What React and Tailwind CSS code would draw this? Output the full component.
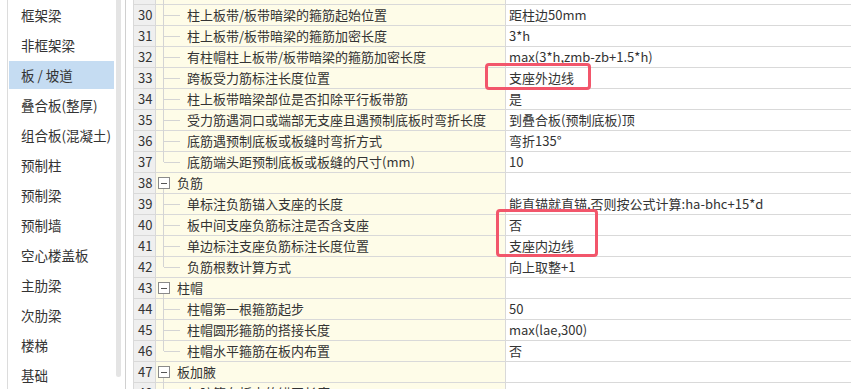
import React from 'react'

const menu = [
  '框架梁',
  '非框架梁',
  '板 / 坡道',
  '叠合板(整厚)',
  '组合板(混凝土)',
  '预制柱',
  '预制梁',
  '预制墙',
  '空心楼盖板',
  '主肋梁',
  '次肋梁',
  '楼梯',
  '基础',
]

// kind: child | last | group
const rows = [
  { n: '', name: '', value: '', kind: 'child' },
  { n: 30, name: '柱上板带/板带暗梁的箍筋起始位置', value: '距柱边50mm', kind: 'child' },
  { n: 31, name: '柱上板带/板带暗梁的箍筋加密长度', value: '3*h', kind: 'child' },
  { n: 32, name: '有柱帽柱上板带/板带暗梁的箍筋加密长度', value: 'max(3*h,zmb-zb+1.5*h)', kind: 'child' },
  { n: 33, name: '跨板受力筋标注长度位置', value: '支座外边线', kind: 'child' },
  { n: 34, name: '柱上板带暗梁部位是否扣除平行板带筋', value: '是', kind: 'child' },
  { n: 35, name: '受力筋遇洞口或端部无支座且遇预制底板时弯折长度', value: '到叠合板(预制底板)顶', kind: 'child' },
  { n: 36, name: '底筋遇预制底板或板缝时弯折方式', value: '弯折135°', kind: 'child' },
  { n: 37, name: '底筋端头距预制底板或板缝的尺寸(mm)', value: '10', kind: 'last' },
  { n: 38, name: '负筋', value: '', kind: 'group' },
  { n: 39, name: '单标注负筋锚入支座的长度', value: '能直锚就直锚,否则按公式计算:ha-bhc+15*d', kind: 'child' },
  { n: 40, name: '板中间支座负筋标注是否含支座', value: '否', kind: 'child' },
  { n: 41, name: '单边标注支座负筋标注长度位置', value: '支座内边线', kind: 'child' },
  { n: 42, name: '负筋根数计算方式', value: '向上取整+1', kind: 'last' },
  { n: 43, name: '柱帽', value: '', kind: 'group' },
  { n: 44, name: '柱帽第一根箍筋起步', value: '50', kind: 'child' },
  { n: 45, name: '柱帽圆形箍筋的搭接长度', value: 'max(lae,300)', kind: 'child' },
  { n: 46, name: '柱帽水平箍筋在板内布置', value: '否', kind: 'last' },
  { n: 47, name: '板加腋', value: '', kind: 'group' },
  { n: 48, name: '加腋筋在板内的锚固长度', value: '', kind: 'child' },
]

function NameCell({ row }) {
  if (row.kind === 'group') {
    return (
      <div className="relative h-full w-[350px] bg-[#fefce8] border-r border-[#d9d9d9] flex items-center pl-[21px]">
        <div className="absolute left-[2px] top-[4px] w-[12px] h-[12px] border border-[#8a8a8a] bg-white flex items-center justify-center">
          <div className="w-[6px] h-px bg-[#555]" />
        </div>
        <div className="absolute left-[7px] top-[16px] bottom-[-1px] w-px bg-[#d4d4d4]" />
        <span>{row.name}</span>
      </div>
    )
  }
  return (
    <div className="relative h-full w-[350px] bg-[#fefce8] border-r border-[#d9d9d9] flex items-center pl-[31px]">
      {row.kind === 'last' ? (
        <div className="absolute left-[7px] top-[-1px] h-[11px] w-px bg-[#d4d4d4]" />
      ) : (
        <div className="absolute left-[7px] top-[-1px] bottom-[-1px] w-px bg-[#d4d4d4]" />
      )}
      <div className="absolute left-[8px] top-[10px] w-[16px] h-px bg-[#d4d4d4]" />
      <span className="whitespace-nowrap">{row.name}</span>
    </div>
  )
}

export default function App() {
  return (
    <div
      className="flex w-[851px] h-[389px] overflow-hidden bg-white text-[13px] text-[#333]"
      style={{ fontFamily: '"Noto Sans CJK SC", "Noto Sans", sans-serif' }}
    >
      <div className="w-[116px] shrink-0 pl-[7px]">
        <div className="h-full border-l border-[#dcdcdc] pl-px">
          {menu.map((m, i) => (
            <div key={m} className="h-[30px] py-px">
              <div
                className={
                  'h-full w-[105px] flex items-center pl-[12px] text-[13.5px] ' +
                  (i === 2 ? 'bg-[#c5dcf2]' : '')
                }
              >
                {m}
              </div>
            </div>
          ))}
        </div>
      </div>

      <div className="w-[5px] shrink-0">
        <div className="h-[377px] w-full rounded-b-[3px] bg-[#e4e4e4]" />
      </div>

      <div className="w-[4px] shrink-0" />
      <div className="w-px shrink-0 bg-[#d0d0d0]" />
      <div className="w-[7px] shrink-0" />

      <div className="relative flex-1 overflow-hidden">
        <div className="mt-[-16px] border-l border-[#d9d9d9]">
          {rows.map((r, i) => (
            <div key={i} className="flex h-[21px] border-b border-[#d9d9d9]">
              <div className="w-[22px] shrink-0 bg-[#efefef] border-r border-[#d9d9d9] flex items-center pl-[4px]">
                {r.n}
              </div>
              <NameCell row={r} />
              <div className="flex-1 flex items-center pl-[3px] whitespace-nowrap">{r.value}</div>
            </div>
          ))}
        </div>

        <div className="absolute left-[352px] top-[63px] w-[106px] h-[27px] border-[3px] border-[#f2566b] rounded-[4px]" />
        <div className="absolute left-[363px] top-[209px] w-[102px] h-[48px] border-[3px] border-[#f2566b] rounded-[4px]" />
      </div>
    </div>
  )
}
